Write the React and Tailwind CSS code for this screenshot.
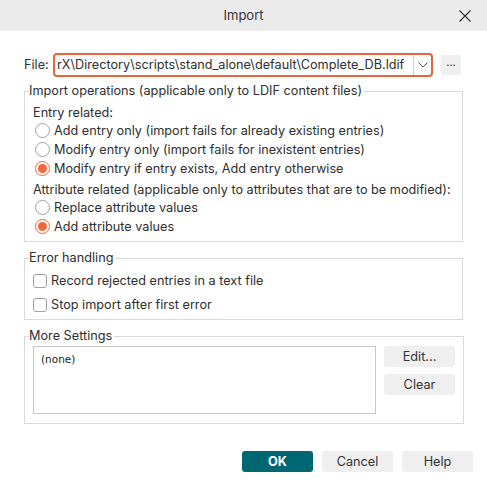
import React, { useState } from "react";

const font = { fontFamily: "Inter, 'Noto Sans', sans-serif" };

function Radio({ checked, label, onClick }) {
  return (
    <div className="flex h-[19px] items-center cursor-default" onClick={onClick}>
      <span
        className={`ml-[2px] flex h-[15px] w-[15px] shrink-0 items-center justify-center rounded-full border ${
          checked ? "border-[#f0683a]" : "border-[#a0a0a0]"
        }`}
      >
        {checked && <span className="h-[9px] w-[9px] rounded-full bg-[#f0683a]" />}
      </span>
      <span className="ml-[4px] whitespace-nowrap">{label}</span>
    </div>
  );
}

function Check({ checked, label, onClick }) {
  return (
    <div className="flex h-[24px] items-center cursor-default" onClick={onClick}>
      <span className="flex h-[14px] w-[14px] items-center justify-center rounded-[3px] border border-[#a0a0a0] bg-white">
        {checked && (
          <svg width="10" height="10" viewBox="0 0 10 10">
            <path d="M1.5 5.2l2.3 2.3 4.7-5" fill="none" stroke="#f0683a" strokeWidth="1.6" />
          </svg>
        )}
      </span>
      <span className="ml-[4px]">{label}</span>
    </div>
  );
}

function Group({ title, className, children }) {
  return (
    <fieldset className={`border border-[#d9d9d9] px-[8px] ${className}`}>
      <legend className="-ml-[4px] h-[16px] pr-[2px] leading-[16px]">{title}</legend>
      {children}
    </fieldset>
  );
}

function Btn({ children, className = "" }) {
  return (
    <button
      className={`flex h-[21px] w-[71px] items-center justify-center rounded-[3px] bg-[#efefef] text-[#333] ${className}`}
    >
      {children}
    </button>
  );
}

export default function App() {
  const [entryMode, setEntryMode] = useState(2);
  const [attrMode, setAttrMode] = useState(1);
  const [recordRejected, setRecordRejected] = useState(false);
  const [stopOnError, setStopOnError] = useState(false);

  return (
    <div className="relative h-[485px] w-[487px] overflow-hidden bg-white text-[12.7px] text-[#2e2e2e]" style={font}>
      {/* Title bar */}
      <div className="grid h-[31px] grid-cols-[1fr_auto_1fr] items-center bg-[#ebebeb]">
        <div />
        <div className="text-[13px] text-[#333]">Import</div>
        <div className="flex justify-end pr-[16px]">
          <svg width="12" height="12" viewBox="0 0 12 12">
            <path d="M0.5 0.5l11 11M11.5 0.5l-11 11" stroke="#333" strokeWidth="1.2" />
          </svg>
        </div>
      </div>

      <div className="px-[24px]">
        {/* File row */}
        <div className="mt-[22px] flex h-[24px] items-center">
          <span className="w-[29px]">File:</span>
          <div className="flex h-[24px] w-[380px] items-center overflow-hidden rounded-[4px] border-2 border-[#e8643c]">
            <div className="flex-1 overflow-hidden whitespace-nowrap pl-[2px] text-[12.7px]">
              rX\Directory\scripts\stand_alone\default\Complete_DB.ldif
            </div>
            <div className="flex h-full w-[18px] shrink-0 items-center justify-center border-l border-[#d0d0d0]">
              <svg width="10" height="6" viewBox="0 0 10 6">
                <path d="M0.5 0.5l4.5 4.5 4.5-4.5" fill="none" stroke="#555" strokeWidth="1" />
              </svg>
            </div>
          </div>
          <button className="ml-[8px] flex h-[20px] w-[20px] items-start justify-center rounded-[3px] bg-[#efefef] text-[11px] leading-[14px]">
            ...
          </button>
        </div>

        {/* Import operations */}
        <Group title="Import operations (applicable only to LDIF content files)" className="mt-[6px] pb-[5px]">
          <div className="mt-[6px] h-[16px] leading-[16px]">Entry related:</div>
          <Radio
            label="Add entry only (import fails for already existing entries)"
            checked={entryMode === 0}
            onClick={() => setEntryMode(0)}
          />
          <Radio
            label="Modify entry only (import fails for inexistent entries)"
            checked={entryMode === 1}
            onClick={() => setEntryMode(1)}
          />
          <Radio
            label="Modify entry if entry exists, Add entry otherwise"
            checked={entryMode === 2}
            onClick={() => setEntryMode(2)}
          />
          <div className="mt-[4px] h-[16px] whitespace-nowrap leading-[16px]">
            Attribute related (applicable only to attributes that are to be modified):
          </div>
          <Radio label="Replace attribute values" checked={attrMode === 0} onClick={() => setAttrMode(0)} />
          <Radio label="Add attribute values" checked={attrMode === 1} onClick={() => setAttrMode(1)} />
        </Group>

        {/* Error handling */}
        <Group title="Error handling" className="mt-[8px] pb-[2px]">
          <div className="mt-[3px]">
            <Check
              label="Record rejected entries in a text file"
              checked={recordRejected}
              onClick={() => setRecordRejected(!recordRejected)}
            />
          </div>
          <Check
            label="Stop import after first error"
            checked={stopOnError}
            onClick={() => setStopOnError(!stopOnError)}
          />
        </Group>

        {/* More Settings */}
        <Group title="More Settings" className="mt-[8px] pb-[9px]">
          <div className="mt-[2px] flex gap-[8px]">
            <div
              className="h-[68px] w-[343px] border border-[#c8c8c8] px-[7px] pt-[5px] text-[10.5px] text-[#222]"
              style={{ fontFamily: "'DejaVu Sans', sans-serif" }}
            >
              (none)
            </div>
            <div className="flex flex-col gap-[7px]">
              <Btn>Edit...</Btn>
              <Btn>Clear</Btn>
            </div>
          </div>
        </Group>

        {/* Bottom buttons */}
        <div className="-mr-[10px] mt-[27px] flex justify-end gap-[9px]">
          <button className="flex h-[21px] w-[71px] items-center justify-center rounded-[3px] bg-[#006672] font-bold text-white">
            OK
          </button>
          <Btn>Cancel</Btn>
          <Btn>Help</Btn>
        </div>
      </div>
    </div>
  );
}
